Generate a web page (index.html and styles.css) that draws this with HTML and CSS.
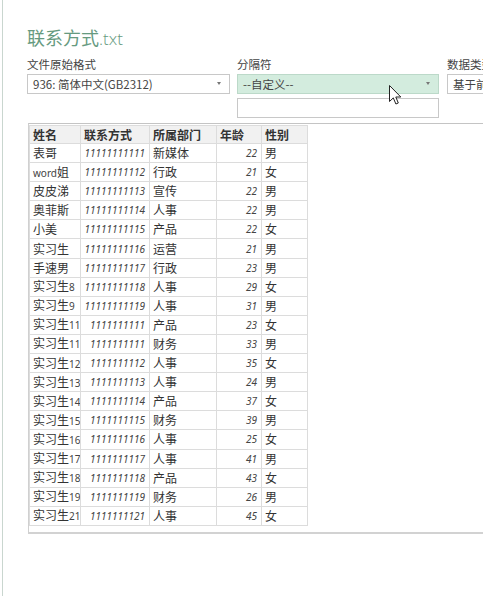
FILE: index.html
```html
<!DOCTYPE html>
<html lang="zh-CN">
<head>
<meta charset="utf-8">
<title>联系方式.txt</title>
<link rel="stylesheet" href="styles.css">
</head>
<body>
<div class="window">
  <div class="content">
    <h1 class="title">联系方式<span class="ext">.txt</span></h1>
    <div class="fields">
      <div class="field f1">
        <div class="label">文件原始格式</div>
        <div class="select"><span>936: 简体中文(GB2312)</span><i class="caret"></i></div>
      </div>
      <div class="field f2">
        <div class="label">分隔符</div>
        <div class="select green"><span>--自定义--</span><i class="caret"></i></div>
        <div class="input"></div>
      </div>
      <div class="field f3">
        <div class="label">数据类型检测</div>
        <div class="select"><span>基于前 200 行</span><i class="caret"></i></div>
      </div>
    </div>
    <div class="preview">
      <table class="grid">
        <colgroup>
          <col class="c1"><col class="c2"><col class="c3"><col class="c4"><col class="c5">
        </colgroup>
        <thead>
          <tr><th>姓名</th><th>联系方式</th><th>所属部门</th><th>年龄</th><th>性别</th></tr>
        </thead>
        <tbody>
          <tr><td>表哥</td><td class="num">11111111111</td><td>新媒体</td><td class="num">22</td><td>男</td></tr>
          <tr><td><span class="lat">word</span>姐</td><td class="num">11111111112</td><td>行政</td><td class="num">21</td><td>女</td></tr>
          <tr><td>皮皮涕</td><td class="num">11111111113</td><td>宣传</td><td class="num">22</td><td>男</td></tr>
          <tr><td>奥菲斯</td><td class="num">11111111114</td><td>人事</td><td class="num">22</td><td>男</td></tr>
          <tr><td>小美</td><td class="num">11111111115</td><td>产品</td><td class="num">22</td><td>女</td></tr>
          <tr><td>实习生</td><td class="num">11111111116</td><td>运营</td><td class="num">21</td><td>男</td></tr>
          <tr><td>手速男</td><td class="num">11111111117</td><td>行政</td><td class="num">23</td><td>男</td></tr>
          <tr><td>实习生<span class="lat">8</span></td><td class="num">11111111118</td><td>人事</td><td class="num">29</td><td>女</td></tr>
          <tr><td>实习生<span class="lat">9</span></td><td class="num">11111111119</td><td>人事</td><td class="num">31</td><td>男</td></tr>
          <tr><td>实习生<span class="lat">11</span></td><td class="num">1111111111</td><td>产品</td><td class="num">23</td><td>女</td></tr>
          <tr><td>实习生<span class="lat">11</span></td><td class="num">1111111111</td><td>财务</td><td class="num">33</td><td>男</td></tr>
          <tr><td>实习生<span class="lat">12</span></td><td class="num">1111111112</td><td>人事</td><td class="num">35</td><td>女</td></tr>
          <tr><td>实习生<span class="lat">13</span></td><td class="num">1111111113</td><td>人事</td><td class="num">24</td><td>男</td></tr>
          <tr><td>实习生<span class="lat">14</span></td><td class="num">1111111114</td><td>产品</td><td class="num">37</td><td>女</td></tr>
          <tr><td>实习生<span class="lat">15</span></td><td class="num">1111111115</td><td>财务</td><td class="num">39</td><td>男</td></tr>
          <tr><td>实习生<span class="lat">16</span></td><td class="num">1111111116</td><td>人事</td><td class="num">25</td><td>女</td></tr>
          <tr><td>实习生<span class="lat">17</span></td><td class="num">1111111117</td><td>人事</td><td class="num">41</td><td>男</td></tr>
          <tr><td>实习生<span class="lat">18</span></td><td class="num">1111111118</td><td>产品</td><td class="num">43</td><td>女</td></tr>
          <tr><td>实习生<span class="lat">19</span></td><td class="num">1111111119</td><td>财务</td><td class="num">26</td><td>男</td></tr>
          <tr><td>实习生<span class="lat">21</span></td><td class="num">1111111121</td><td>人事</td><td class="num">45</td><td>女</td></tr>
        </tbody>
      </table>
    </div>
  </div>
  <div class="footer">
    <div class="btn b1"></div>
    <div class="btn b2"></div>
  </div>
  <svg class="cursor" width="13" height="20" viewBox="0 0 13 20" aria-hidden="true">
    <path d="M0.5 0.5 L0.5 16.5 L4.3 12.9 L6.9 19 L9.3 18 L6.8 12 L11.8 12 Z" fill="#fff" stroke="#222" stroke-width="1" stroke-linejoin="miter"/>
  </svg>
</div>
</body>
</html>
```
FILE: styles.css
```css
html, body {
  margin: 0;
  padding: 0;
  width: 483px;
  height: 596px;
  overflow: hidden;
  background: #fff;
}

body {
  font-family: "Noto Sans CJK SC", "Noto Sans", sans-serif;
  color: #333;
}

.window {
  position: relative;
  margin-left: 2px;
  border-left: 1px solid #c9d6cf;
  height: 596px;
  overflow: hidden;
}

.content {
  padding-left: 24px;
}

.title {
  margin: 0;
  padding-top: 25px;
  font-size: 18px;
  line-height: 24px;
  font-weight: 400;
  color: #669a80;
  white-space: nowrap;
}

.title .ext {
  font-family: "Open Sans", "Noto Sans", sans-serif;
  font-weight: 300;
  font-size: 17px;
}

.fields {
  display: flex;
  margin-top: 6px;
  width: 700px;
}

.field {
  flex: 0 0 auto;
}

.f1 { width: 203px; margin-right: 7px; }
.f2 { width: 202px; margin-right: 8px; }
.f3 { width: 160px; }

.label {
  font-size: 11.5px;
  line-height: 14px;
  color: #444;
  white-space: nowrap;
}

.select {
  margin-top: 3px;
  height: 20px;
  box-sizing: border-box;
  border: 1px solid #c8c8c8;
  background: #fff;
  display: flex;
  align-items: center;
  justify-content: space-between;
  padding: 0 8px 0 5px;
  font-size: 11.5px;
  line-height: 18px;
  color: #444;
  white-space: nowrap;
}

.select.green {
  background: #d3ecde;
  border-color: #bcd9c9;
}

.caret {
  display: block;
  width: 0;
  height: 0;
  border-left: 2.5px solid transparent;
  border-right: 2.5px solid transparent;
  border-top: 3px solid #777;
  margin-top: -1px;
}

.input {
  margin-top: 4px;
  height: 20px;
  box-sizing: border-box;
  border: 1px solid #c8c8c8;
  background: #fff;
}

.preview {
  margin-top: 5px;
  margin-left: 1px;
  border-top: 1px solid #c4c4c4;
  border-left: 1px solid #d0d0d0;
  border-bottom: 2px solid #d2d2d2;
  padding: 1px 0 6px 0;
}

.grid {
  border-collapse: collapse;
  table-layout: fixed;
  width: 278px;
  border: 1px solid #d9d9d9;
  font-size: 12px;
  color: #333;
}

.c1 { width: 51px; }
.c2 { width: 69px; }
.c3 { width: 67px; }
.c4 { width: 45px; }
.c5 { width: 46px; }

.grid th,
.grid td {
  border: 1px solid #dcdcdc;
  padding: 0 0 0 3px;
  text-align: left;
  white-space: nowrap;
  overflow: hidden;
  line-height: 16px;
}

.grid thead tr {
  height: 18px;
}

.grid th {
  background: #f1f1f1;
  font-weight: 700;
  color: #333;
}

.grid tbody tr {
  height: 19.1px;
}

.grid td .lat {
  font-family: "Noto Sans", sans-serif;
  font-size: 10px;
  color: #444;
}

.grid td.num {
  text-align: right;
  padding: 0 4px 0 0;
  font-family: "Noto Sans", sans-serif;
  font-style: italic;
  font-size: 10px;
  color: #444;
}

.footer {
  margin-top: 63px;
  height: 30px;
  background: #eef4f1;
  border-top: 1px solid #e0ebe5;
  display: flex;
  padding-left: 282px;
}

.btn {
  height: 24px;
  background: #e2e4e3;
  border-top: 1px solid #c2c6c4;
}

.b1 { width: 58px; margin-right: 14px; }
.b2 { width: 45px; }

.cursor {
  position: absolute;
  left: 386px;
  top: 85px;
}
```
